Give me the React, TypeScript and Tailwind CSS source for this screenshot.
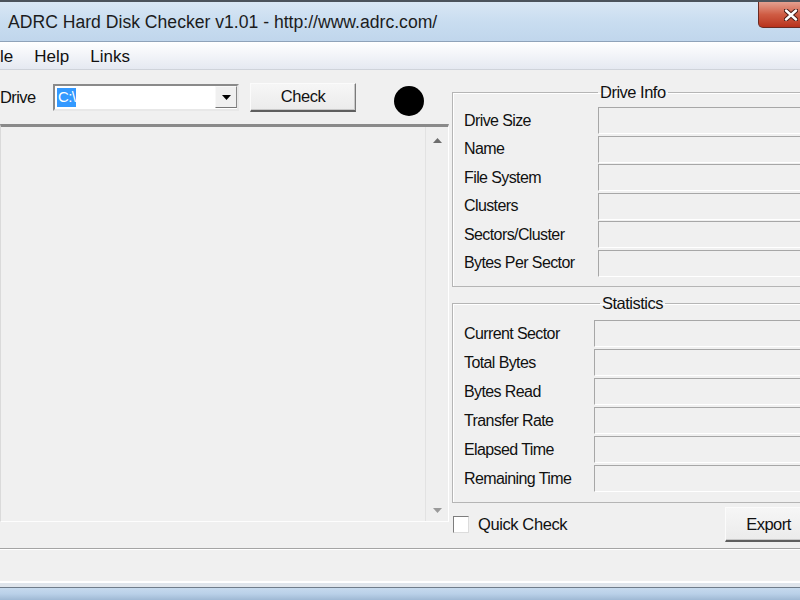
import React from "react";

const driveInfo = [
  "Drive Size",
  "Name",
  "File System",
  "Clusters",
  "Sectors/Cluster",
  "Bytes Per Sector",
];

const statistics = [
  "Current Sector",
  "Total Bytes",
  "Bytes Read",
  "Transfer Rate",
  "Elapsed Time",
  "Remaining Time",
];

function Field() {
  return (
    <div className="h-[27px] flex-1 border-t border-l border-t-[#a7a7a7] border-l-[#a7a7a7] border-b border-r border-b-white border-r-white" />
  );
}

function Button({ label, className }: { label: string; className: string }) {
  return (
    <div
      className={`flex items-center justify-center border border-t-[#fbfbfb] border-l-[#fbfbfb] border-r-[#7a7a7a] border-b-2 border-b-[#5f5f5f] bg-gradient-to-b from-[#f6f6f6] to-[#ebebeb] shadow-[inset_-1px_-1px_0_#c8c8c8] text-[16.5px] tracking-[-0.5px] ${className}`}
    >
      {label}
    </div>
  );
}

export default function App() {
  return (
    <div className="flex h-[600px] w-[800px] flex-col overflow-hidden bg-[#f0f0f0] font-['Liberation_Sans',Arial,sans-serif] text-[#111]">
      {/* title bar */}
      <div className="flex h-[42px] shrink-0 border-t-2 border-t-[#4b535c] border-b border-b-[#8fa3b9] bg-gradient-to-b from-[#d9e7f5] via-[#c9ddf0] to-[#c0d6ec]">
        <div className="flex-1 pl-[8px] pt-[10px] text-[17.6px] leading-[20px] text-[#1c1c1c]">
          ADRC Hard Disk Checker v1.01 - http://www.adrc.com/
        </div>
        <div className="-mr-[24px] flex h-[26px] w-[66px] shrink-0 items-center justify-center rounded-bl-[5px] border border-t-0 border-[#6a2a22] bg-gradient-to-b from-[#e3a090] via-[#cf5c44] to-[#b8321c]">
          <svg width="14" height="12" viewBox="0 0 14 12">
            <path d="M2 1.5 L12 10.5 M12 1.5 L2 10.5" stroke="#4a1c16" strokeWidth="4.5" strokeLinecap="round" />
            <path d="M2 1.5 L12 10.5 M12 1.5 L2 10.5" stroke="#ffffff" strokeWidth="2.4" strokeLinecap="round" />
          </svg>
        </div>
      </div>

      {/* menu bar */}
      <div className="flex h-[28px] shrink-0 items-center gap-[21px] border-b border-b-[#cfd3da] bg-gradient-to-b from-[#ffffff] to-[#e5e9f1] pt-[3px] text-[17px]">
        <span>le</span>
        <span>Help</span>
        <span>Links</span>
      </div>

      {/* main area */}
      <div className="flex h-[478px] shrink-0">
        <div className="flex w-[450px] shrink-0 flex-col">
          <div className="flex h-[54px] items-center">
            <span className="w-[53px] text-[16.5px] tracking-[-0.6px]">Drive</span>
            <div className="flex h-[27px] w-[186px] items-center border-2 border-t-[#8a8a8a] border-l-[#8a8a8a] border-r-[#e8e8e8] border-b-[#e8e8e8] bg-white pl-[2px]">
              <div className="flex flex-1">
                <span className="flex h-[19px] items-center bg-[#3399ff] px-[1px] text-[15px] tracking-[-0.6px] text-white">C:\</span>
              </div>
              <div className="flex h-[22px] w-[22px] items-center justify-center border border-t-[#f8f8f8] border-l-[#f8f8f8] border-r-[#888] border-b-[#777] bg-[#f0f0f0]">
                <svg width="9" height="5" viewBox="0 0 9 5">
                  <path d="M0 0 H9 L4.5 5 Z" fill="#000" />
                </svg>
              </div>
            </div>
            <Button label="Check" className="ml-[11px] h-[29px] w-[106px]" />
            <div className="ml-[38px] mt-[8px] h-[30px] w-[30px] rounded-full bg-black" />
          </div>

          <div className="flex h-[398px] w-[449px] border-t-[3px] border-t-[#8a8a8a] border-l border-l-[#dadada] border-r border-r-white border-b border-b-[#fdfdfd]">
            <div className="flex-1" />
            <div className="flex w-[23px] flex-col items-center justify-between border-l border-l-[#e2e2e2] bg-[#efefef] pt-[11px] pb-[8px]">
              <svg width="9" height="5" viewBox="0 0 9 5">
                <path d="M0 5 H9 L4.5 0 Z" fill="#6d6d6d" />
              </svg>
              <svg width="9" height="5" viewBox="0 0 9 5">
                <path d="M0 0 H9 L4.5 5 Z" fill="#9a9a9a" />
              </svg>
            </div>
          </div>
        </div>

        <div className="ml-[2px] flex w-[360px] shrink-0 flex-col">
          <fieldset className="mt-[13px] h-[204px] border border-[#b5b5b5] shadow-[inset_1px_1px_0_#ffffff]">
            <legend className="ml-[145px] px-[2px] text-[16.5px] leading-[18px] tracking-[-0.5px]">
              Drive Info
            </legend>
            <div className="mt-[6px] flex flex-col gap-[1.5px]">
              {driveInfo.map((label) => (
                <div key={label} className="flex items-center">
                  <span className="w-[145px] shrink-0 pl-[11px] text-[16px] tracking-[-0.6px]">{label}</span>
                  <Field />
                </div>
              ))}
            </div>
          </fieldset>

          <fieldset className="mt-[7px] h-[209px] border border-[#b5b5b5] shadow-[inset_1px_1px_0_#ffffff]">
            <legend className="ml-[147px] px-[2px] text-[16.5px] leading-[18px] tracking-[-0.5px]">
              Statistics
            </legend>
            <div className="mt-[8px] flex flex-col gap-[2px]">
              {statistics.map((label) => (
                <div key={label} className="flex items-center">
                  <span className="w-[141px] shrink-0 pl-[11px] text-[16px] tracking-[-0.6px]">{label}</span>
                  <Field />
                </div>
              ))}
            </div>
          </fieldset>

          <div className="mt-[4px] flex h-[35px] items-center justify-between">
            <div className="flex items-center">
              <div className="ml-[1px] h-[17px] w-[16px] border border-t-[#7d7d7d] border-l-[#7d7d7d] border-r-[#dcdcdc] border-b-[#dcdcdc] bg-white" />
              <span className="ml-[9px] text-[16.5px] tracking-[-0.4px]">Quick Check</span>
            </div>
            <Button label="Export" className="h-[35px] w-[87px]" />
          </div>
        </div>
      </div>

      {/* status bar and bottom frame */}
      <div className="h-[1px] shrink-0 bg-[#a4a4a4]" />
      <div className="h-[1px] shrink-0 bg-white" />
      <div className="h-[31px] shrink-0" />
      <div className="h-[2px] shrink-0 bg-white" />
      <div className="h-[4px] shrink-0 bg-[#dfe5ec]" />
      <div className="h-[1px] shrink-0 bg-[#6f7c8a]" />
      <div className="h-[12px] shrink-0 bg-gradient-to-b from-[#c6daee] via-[#b9d0e8] to-[#9fb9d4]" />
    </div>
  );
}
